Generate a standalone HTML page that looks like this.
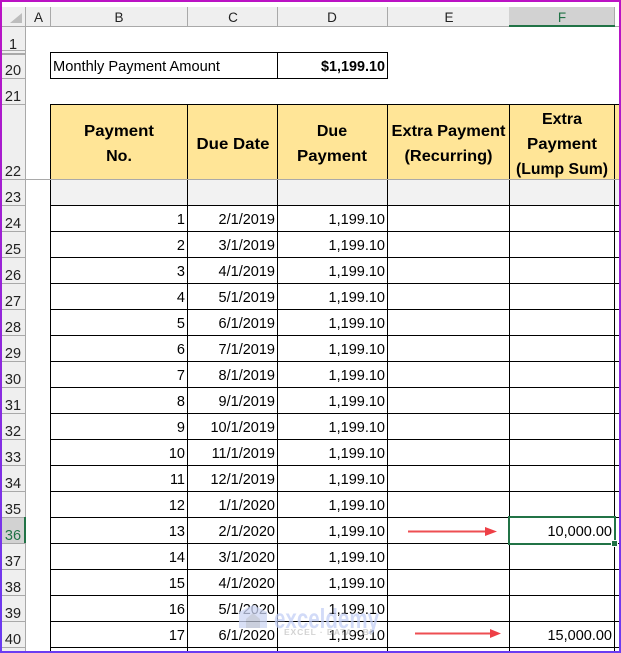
<!DOCTYPE html>
<html><head><meta charset="utf-8"><style>
html,body{margin:0;padding:0;background:#fff;width:621px;height:653px;overflow:hidden}
svg{display:block}
text{font-family:"Liberation Sans",sans-serif;fill:#000}
.h{font-size:13.5px;fill:#222;text-anchor:middle}
.r{font-size:14.5px;fill:#222;text-anchor:middle}
.n{font-size:14.5px;text-anchor:end}
.b{font-size:16px;font-weight:bold;text-anchor:middle}
</style></head><body>
<svg width="621" height="653" viewBox="0 0 621 653" xmlns="http://www.w3.org/2000/svg">
<defs><linearGradient id="g" x1="0" y1="0" x2="0" y2="1"><stop offset="0" stop-color="#bb12c4"/><stop offset="1" stop-color="#6a3cf2"/></linearGradient></defs>
<rect width="621" height="653" fill="#fff"/>
<!-- headers -->
<rect x="2" y="7" width="613" height="19" fill="#efefef"/>
<rect x="2" y="26" width="23" height="625" fill="#efefef"/>
<path d="M22 13V23H10Z" fill="#bdbdbd"/>
<rect x="509" y="7" width="106" height="18" fill="#d2d2d2"/>
<rect x="2" y="517" width="23" height="26" fill="#d2d2d2"/>
<g fill="#a9a9a9">
<rect x="25" y="7" width="1" height="19"/><rect x="50" y="7" width="1" height="19"/><rect x="187" y="7" width="1" height="19"/><rect x="277" y="7" width="1" height="19"/><rect x="387" y="7" width="1" height="19"/><rect x="614" y="7" width="1" height="19"/>
<rect x="2" y="26" width="617" height="1"/>
<rect x="25" y="26" width="1" height="625"/>
<rect x="2" y="50" width="23" height="1"/><rect x="2" y="53" width="23" height="2"/><rect x="2" y="78" width="23" height="1"/><rect x="2" y="104" width="23" height="1"/>
<rect x="2" y="179" width="617" height="1"/>
<rect x="2" y="205" width="23" height="1"/><rect x="2" y="231" width="23" height="1"/><rect x="2" y="257" width="23" height="1"/><rect x="2" y="283" width="23" height="1"/><rect x="2" y="309" width="23" height="1"/><rect x="2" y="335" width="23" height="1"/><rect x="2" y="361" width="23" height="1"/><rect x="2" y="387" width="23" height="1"/><rect x="2" y="413" width="23" height="1"/><rect x="2" y="439" width="23" height="1"/><rect x="2" y="465" width="23" height="1"/><rect x="2" y="491" width="23" height="1"/><rect x="2" y="517" width="23" height="1"/><rect x="2" y="543" width="23" height="1"/><rect x="2" y="569" width="23" height="1"/><rect x="2" y="595" width="23" height="1"/><rect x="2" y="621" width="23" height="1"/><rect x="2" y="647" width="23" height="1"/>
</g>
<rect x="509" y="25" width="106" height="2" fill="#217346"/>
<rect x="24" y="517" width="2" height="26" fill="#217346"/>
<text class="h" x="38.500" y="22">A</text><text class="h" x="119" y="22">B</text><text class="h" x="233" y="22">C</text><text class="h" x="332" y="22">D</text><text class="h" x="449" y="22">E</text><text class="h" x="562" y="22" style="fill:#217346">F</text>
<g class="rows">
<text class="r" x="13" y="49">1</text><text class="r" x="13" y="75">20</text><text class="r" x="13" y="101">21</text><text class="r" x="13" y="176">22</text><text class="r" x="13" y="202">23</text><text class="r" x="13" y="228">24</text><text class="r" x="13" y="254">25</text><text class="r" x="13" y="280">26</text><text class="r" x="13" y="306">27</text><text class="r" x="13" y="332">28</text><text class="r" x="13" y="358">29</text><text class="r" x="13" y="384">30</text><text class="r" x="13" y="410">31</text><text class="r" x="13" y="436">32</text><text class="r" x="13" y="462">33</text><text class="r" x="13" y="488">34</text><text class="r" x="13" y="514">35</text><text class="r" x="13" y="540" style="fill:#217346">36</text><text class="r" x="13" y="566">37</text><text class="r" x="13" y="592">38</text><text class="r" x="13" y="618">39</text><text class="r" x="13" y="644">40</text>
</g>
<!-- top box -->
<rect x="50.500" y="52.500" width="337" height="26" fill="#fff" stroke="#000"/>
<rect x="277" y="52" width="1" height="27" fill="#000"/>
<text x="53" y="71" style="font-size:14.500px" textLength="167" lengthAdjust="spacingAndGlyphs">Monthly Payment Amount</text>
<text x="385" y="71" text-anchor="end" style="font-size:14.500px;font-weight:bold" textLength="64" lengthAdjust="spacingAndGlyphs">$1,199.10</text>
<!-- table fills -->
<rect x="50" y="104" width="566" height="75" fill="#ffe597"/>
<rect x="50" y="180" width="566" height="25" fill="#f2f2f2"/>
<rect x="616" y="105" width="3" height="74" fill="#ffe597"/>
<rect x="616" y="180" width="3" height="25" fill="#f2f2f2"/>
<!-- lines -->
<g fill="#000">
<rect x="50" y="104" width="569" height="1"/>
<rect x="50" y="205" width="569" height="1"/><rect x="50" y="231" width="569" height="1"/><rect x="50" y="257" width="569" height="1"/><rect x="50" y="283" width="569" height="1"/><rect x="50" y="309" width="569" height="1"/><rect x="50" y="335" width="569" height="1"/><rect x="50" y="361" width="569" height="1"/><rect x="50" y="387" width="569" height="1"/><rect x="50" y="413" width="569" height="1"/><rect x="50" y="439" width="569" height="1"/><rect x="50" y="465" width="569" height="1"/><rect x="50" y="491" width="569" height="1"/><rect x="50" y="517" width="569" height="1"/><rect x="50" y="543" width="569" height="1"/><rect x="50" y="569" width="569" height="1"/><rect x="50" y="595" width="569" height="1"/><rect x="50" y="621" width="569" height="1"/><rect x="50" y="647" width="569" height="1"/>
<rect x="50" y="104" width="1" height="547"/><rect x="187" y="104" width="1" height="547"/><rect x="277" y="104" width="1" height="547"/><rect x="387" y="104" width="1" height="547"/><rect x="509" y="104" width="1" height="547"/><rect x="614" y="104" width="1" height="547"/>
</g>
<rect x="26" y="179" width="593" height="1" fill="#a9a9a9"/>
<!-- heading -->
<g>
<text class="b" x="119" y="136" textLength="70" lengthAdjust="spacingAndGlyphs">Payment</text>
<text class="b" x="119" y="161">No.</text>
<text class="b" x="233" y="149" textLength="73" lengthAdjust="spacingAndGlyphs">Due Date</text>
<text class="b" x="332" y="136">Due</text>
<text class="b" x="332" y="161" textLength="70" lengthAdjust="spacingAndGlyphs">Payment</text>
<text class="b" x="448.500" y="136" textLength="114" lengthAdjust="spacingAndGlyphs">Extra Payment</text>
<text class="b" x="448.500" y="161" textLength="88" lengthAdjust="spacingAndGlyphs">(Recurring)</text>
<text class="b" x="562" y="124" textLength="40" lengthAdjust="spacingAndGlyphs">Extra</text>
<text class="b" x="562" y="149" textLength="70" lengthAdjust="spacingAndGlyphs">Payment</text>
<text class="b" x="562" y="174" textLength="92" lengthAdjust="spacingAndGlyphs">(Lump Sum)</text>
</g>
<!-- data -->
<g class="data">
<text class="n" x="185" y="224">1</text><text class="n" x="275" y="224">2/1/2019</text><text class="n" x="385" y="224">1,199.10</text>
<text class="n" x="185" y="250">2</text><text class="n" x="275" y="250">3/1/2019</text><text class="n" x="385" y="250">1,199.10</text>
<text class="n" x="185" y="276">3</text><text class="n" x="275" y="276">4/1/2019</text><text class="n" x="385" y="276">1,199.10</text>
<text class="n" x="185" y="302">4</text><text class="n" x="275" y="302">5/1/2019</text><text class="n" x="385" y="302">1,199.10</text>
<text class="n" x="185" y="328">5</text><text class="n" x="275" y="328">6/1/2019</text><text class="n" x="385" y="328">1,199.10</text>
<text class="n" x="185" y="354">6</text><text class="n" x="275" y="354">7/1/2019</text><text class="n" x="385" y="354">1,199.10</text>
<text class="n" x="185" y="380">7</text><text class="n" x="275" y="380">8/1/2019</text><text class="n" x="385" y="380">1,199.10</text>
<text class="n" x="185" y="406">8</text><text class="n" x="275" y="406">9/1/2019</text><text class="n" x="385" y="406">1,199.10</text>
<text class="n" x="185" y="432">9</text><text class="n" x="275" y="432">10/1/2019</text><text class="n" x="385" y="432">1,199.10</text>
<text class="n" x="185" y="458">10</text><text class="n" x="275" y="458">11/1/2019</text><text class="n" x="385" y="458">1,199.10</text>
<text class="n" x="185" y="484">11</text><text class="n" x="275" y="484">12/1/2019</text><text class="n" x="385" y="484">1,199.10</text>
<text class="n" x="185" y="510">12</text><text class="n" x="275" y="510">1/1/2020</text><text class="n" x="385" y="510">1,199.10</text>
<text class="n" x="185" y="536">13</text><text class="n" x="275" y="536">2/1/2020</text><text class="n" x="385" y="536">1,199.10</text>
<text class="n" x="185" y="562">14</text><text class="n" x="275" y="562">3/1/2020</text><text class="n" x="385" y="562">1,199.10</text>
<text class="n" x="185" y="588">15</text><text class="n" x="275" y="588">4/1/2020</text><text class="n" x="385" y="588">1,199.10</text>
<text class="n" x="185" y="614">16</text><text class="n" x="275" y="614">5/1/2020</text><text class="n" x="385" y="614">1,199.10</text>
<text class="n" x="185" y="640">17</text><text class="n" x="275" y="640">6/1/2020</text><text class="n" x="385" y="640">1,199.10</text>
<text class="n" x="612" y="536">10,000.00</text>
<text class="n" x="612" y="640">15,000.00</text>
</g>
<!-- watermark (semi-transparent, over the cells) -->
<g opacity=".75">
<path d="M239 612L253 605L267 612V628H239Z" fill="#cdd6f4"/>
<path d="M246 628V619L253 613L260 619V628Z" fill="#b9bfd2"/>
<text x="274" y="628" style="font-size:28px;font-weight:bold;fill:#c3cff6" textLength="105" lengthAdjust="spacingAndGlyphs">exceldemy</text>
<text x="284" y="635" style="font-size:8.500px;font-weight:bold;fill:#c4c4c4" textLength="88" lengthAdjust="spacing">EXCEL · DATA · BI</text>
</g>
<!-- selection -->
<rect x="509" y="517" width="106" height="27" fill="none" stroke="#217346" stroke-width="2"/>
<rect x="611" y="540" width="7" height="7" fill="#fff"/>
<rect x="612" y="541" width="5" height="5" fill="#217346"/>
<!-- arrows -->
<rect x="408" y="530.500" width="78" height="2" fill="#ee4e52"/>
<path d="M485 527L497 531.500L485 536Z" fill="#ee3f46"/>
<rect x="415" y="632.500" width="78" height="2" fill="#ee4e52"/>
<path d="M490 629L501 633.500L490 638Z" fill="#ee3f46"/>
<!-- outer border -->
<rect x="0" y="0" width="621" height="2" fill="#bb12c4"/>
<rect x="0" y="651" width="621" height="2" fill="#6a3cf2"/>
<rect x="0" y="0" width="2" height="653" fill="url(#g)"/>
<rect x="619" y="0" width="2" height="653" fill="url(#g)"/>
</svg>
</body></html>
